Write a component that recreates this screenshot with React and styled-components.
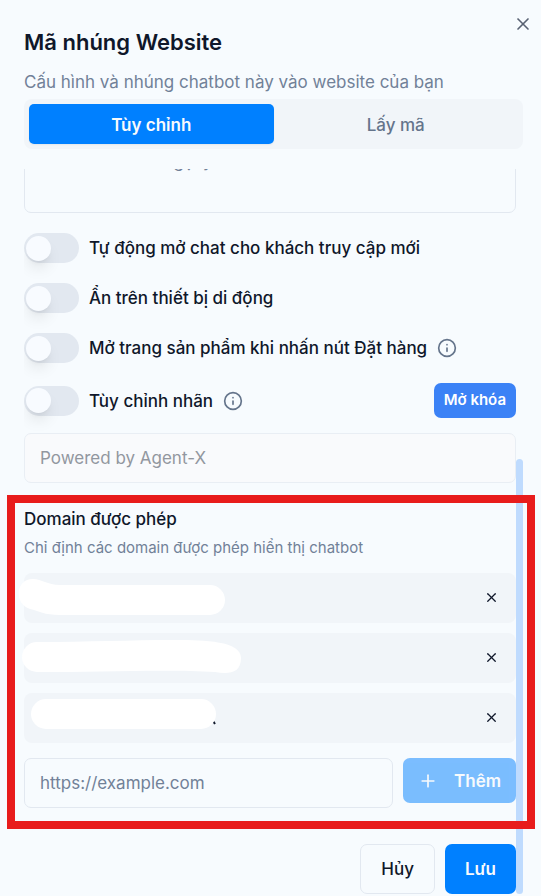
import React, { useLayoutEffect, useRef } from 'react';
import styled, { createGlobalStyle } from 'styled-components';
import { Info, Plus, X } from 'lucide-react';

const GlobalStyle = createGlobalStyle`
  *, *::before, *::after {
    box-sizing: border-box;
  }

  body {
    margin: 0;
    background: #f7fbfe;
    color: #0f172a;
    font-family: Inter, 'Noto Sans', sans-serif;
    font-size: 17px;
    line-height: 24px;
  }

  button, input, textarea {
    font: inherit;
    color: inherit;
  }

  h2, p, ul {
    margin: 0;
    padding: 0;
  }
`;

const Dialog = styled.main`
  position: relative;
  display: flex;
  flex-direction: column;
  height: 100vh;
  padding: 30px 18px 2px 24px;
  overflow: hidden;
`;

const CloseButton = styled.button`
  position: absolute;
  top: 14px;
  right: 8px;
  display: flex;
  padding: 0;
  border: 0;
  background: none;
  color: #596273;
  cursor: pointer;
`;

const Title = styled.h2`
  font-size: 22px;
  font-weight: 600;
  line-height: 24px;
`;

const Description = styled.p`
  margin-top: 16px;
  color: #718198;
`;

const Tabs = styled.div`
  display: grid;
  grid-template-columns: 1fr 1fr;
  margin-top: 5px;
  padding: 5px;
  border-radius: 8px;
  background: #f1f5f9;
`;

const Tab = styled.button`
  height: 40px;
  padding: 2px 15px 0;
  border: 0;
  border-radius: 5px;
  background: ${props => (props.$active ? '#0080ff' : 'transparent')};
  color: ${props => (props.$active ? '#f8fafc' : '#64748b')};
  font-weight: ${props => (props.$active ? 600 : 500)};
  box-shadow: ${props => (props.$active ? '0 1px 2px rgba(0, 0, 0, 0.06)' : 'none')};
  cursor: pointer;
`;

const Body = styled.div`
  display: flex;
  flex: 1;
  min-height: 0;
  margin-top: 20px;
`;

const ScrollArea = styled.form`
  flex: 1;
  min-width: 0;
  overflow-x: hidden;
  overflow-y: auto;
  scrollbar-width: none;
`;

const Rail = styled.div`
  display: flex;
  align-items: flex-end;
  width: 7px;
`;

const Thumb = styled.div`
  width: 100%;
  height: 60%;
  border-radius: 4px;
  background: #bfdbfe;
`;

const Field = styled.input`
  display: block;
  width: 100%;
  min-width: 0;
  height: 50px;
  padding: 0 15px;
  border: 1px solid #e2e8f0;
  border-radius: 7px;
  background: transparent;

  &::placeholder {
    color: #718198;
    opacity: 1;
  }

  &:disabled {
    border-color: #e9eef4;
    background: #f9fafc;
  }

  &:disabled::placeholder {
    color: #92979f;
  }
`;

const Suggestions = styled(Field)`
  height: 100px;
  padding: 35px 15px 10px;
  resize: none;
`;

const Switches = styled.div`
  display: flex;
  flex-direction: column;
  gap: 20px;
  margin-top: 20px;
`;

const SwitchRow = styled.div`
  display: flex;
  align-items: center;
`;

const SwitchLabel = styled.label`
  display: flex;
  align-items: center;
  gap: 10px;
  font-weight: 500;
  cursor: pointer;
`;

const Switch = styled.input.attrs({ type: 'checkbox', role: 'switch' })`
  display: flex;
  align-items: center;
  flex: none;
  width: 55px;
  height: 30px;
  margin: 0;
  padding: 2px;
  border-radius: 15px;
  background: #e2e8f0;
  appearance: none;
  cursor: pointer;

  &::before {
    content: '';
    width: 25px;
    height: 25px;
    border-radius: 50%;
    background: #f8fbff;
    box-shadow: 0 10px 15px -3px rgba(0, 0, 0, 0.1), 0 4px 6px -4px rgba(0, 0, 0, 0.1);
    transition: margin 150ms;
  }

  &:checked {
    background: #0080ff;
  }

  &:checked::before {
    margin-left: 25px;
  }
`;

const InfoIcon = styled(Info)`
  flex: none;
  margin-left: 10px;
  color: #64748b;
`;

const UnlockButton = styled.button`
  height: 35px;
  margin-left: auto;
  padding: 0 10px 2px;
  border: 0;
  border-radius: 7px;
  background: #3b82f6;
  color: #fff;
  font-size: 15px;
  font-weight: 600;
  cursor: pointer;
`;

const BrandField = styled(Field)`
  margin-top: 15px;
`;

const Domains = styled.section`
  margin-top: 24px;
`;

const DomainTitle = styled.label`
  display: block;
  font-weight: 500;
`;

const Hint = styled.p`
  margin-top: 6px;
  color: #718198;
  font-size: 15px;
  line-height: 22px;
`;

const DomainList = styled.ul`
  display: flex;
  flex-direction: column;
  gap: 10px;
  margin-top: 14px;
  list-style: none;
`;

const DomainItem = styled.li`
  display: flex;
  align-items: center;
  justify-content: flex-end;
  height: 50px;
  padding: 0 17px 2px;
  border-radius: 8px;
  background: #f1f5f9;
`;

const RemoveButton = styled.button`
  display: flex;
  padding: 0;
  border: 0;
  background: none;
  cursor: pointer;
`;

const AddRow = styled.div`
  display: flex;
  align-items: flex-start;
  gap: 10px;
  margin-top: 15px;
`;

const AddButton = styled.button`
  display: flex;
  align-items: center;
  flex: none;
  gap: 16px;
  height: 45px;
  padding: 0 15px;
  border: 0;
  border-radius: 7px;
  background: #0080ff;
  color: #f8fafc;
  font-weight: 600;
  opacity: 0.5;
`;

const Footer = styled.footer`
  display: flex;
  justify-content: flex-end;
  gap: 10px;
  margin-top: 36px;
`;

const FooterButton = styled.button`
  height: 50px;
  padding: 0 20px;
  border: ${props => (props.$primary ? '0' : '1px solid #e2e8f0')};
  border-radius: 7px;
  background: ${props => (props.$primary ? '#0080ff' : 'transparent')};
  color: ${props => (props.$primary ? '#f8fafc' : '#0f172a')};
  font-weight: ${props => (props.$primary ? 600 : 500)};
  cursor: pointer;
`;

// Hand-drawn marks lie over the whole dialog
const Markup = styled.svg`
  position: absolute;
  top: 0;
  left: 0;
  width: 541px;
  height: 896px;
  pointer-events: none;
`;

const switches = [
  { id: 'auto-open', label: 'Tự động mở chat cho khách truy cập mới' },
  { id: 'hide-mobile', label: 'Ẩn trên thiết bị di động' },
  { id: 'open-product', label: 'Mở trang sản phẩm khi nhấn nút Đặt hàng', info: true },
  { id: 'custom-label', label: 'Tùy chỉnh nhãn', info: true, locked: true },
];

const SwitchOption = ({ id, label, info, locked }) => (
  <SwitchRow>
    <SwitchLabel htmlFor={id}>
      <Switch id={id} />
      {label}
    </SwitchLabel>
    {info && <InfoIcon size={20} strokeWidth={2} />}
    {locked && <UnlockButton type="button">Mở khóa</UnlockButton>}
  </SwitchRow>
);

const App = () => {
  const scrollRef = useRef(null);

  // open the form at its last section
  useLayoutEffect(() => {
    scrollRef.current.scrollTop = scrollRef.current.scrollHeight;
  }, []);

  return (
    <Dialog>
      <GlobalStyle />
      <CloseButton type="button" aria-label="Đóng">
        <X size={20} strokeWidth={2} />
      </CloseButton>
      <Title>Mã nhúng Website</Title>
      <Description>Cấu hình và nhúng chatbot này vào website của bạn</Description>
      <Tabs role="tablist">
        <Tab type="button" role="tab" aria-selected="true" $active>Tùy chỉnh</Tab>
        <Tab type="button" role="tab" aria-selected="false">Lấy mã</Tab>
      </Tabs>
      <Body>
        <ScrollArea ref={scrollRef}>
          <Suggestions as="textarea" aria-label="Câu hỏi gợi ý" placeholder="Viết các câu hỏi gợi ý..." />
          <Switches>
            {switches.map(item => <SwitchOption key={item.id} {...item} />)}
          </Switches>
          <BrandField disabled aria-label="Nhãn" placeholder="Powered by Agent-X" />
          <Domains>
            <DomainTitle htmlFor="domain">Domain được phép</DomainTitle>
            <Hint>Chỉ định các domain được phép hiển thị chatbot</Hint>
            <DomainList>
              {[1, 2, 3].map(n => (
                <DomainItem key={n}>
                  <RemoveButton type="button" aria-label={`Xóa domain ${n}`}>
                    <X size={15} strokeWidth={2} />
                  </RemoveButton>
                </DomainItem>
              ))}
            </DomainList>
            <AddRow>
              <Field id="domain" type="url" placeholder="https://example.com" />
              <AddButton type="button" disabled>
                <Plus size={20} strokeWidth={2} />
                Thêm
              </AddButton>
            </AddRow>
          </Domains>
          <Footer>
            <FooterButton type="button">Hủy</FooterButton>
            <FooterButton type="button" $primary>Lưu</FooterButton>
          </Footer>
        </ScrollArea>
        <Rail>
          <Thumb />
        </Rail>
      </Body>
      <Markup viewBox="0 0 541 896" aria-hidden="true">
        <path d="M33 579C42 579 47 585 60 585H210a15 15 0 0 1 0 30H60C44 615 39 611 30 609C14 604 15 579 33 579Z" fill="#fff" />
        <path d="M37 642C90 642 130 640 175 640C205 640 241 641 241 658C241 674 228 674 215 672C170 669 100 672 37 672a15 15 0 0 1 0-30Z" fill="#fff" />
        <path d="M213 721L215 724" stroke="#0f172a" strokeWidth="2" />
        <rect x="31" y="699" width="185" height="30" rx="15" fill="#fff" />
        <rect x="11" y="499" width="520" height="326" fill="none" stroke="#e81c1c" strokeWidth="8" />
      </Markup>
    </Dialog>
  );
};

export default App;
